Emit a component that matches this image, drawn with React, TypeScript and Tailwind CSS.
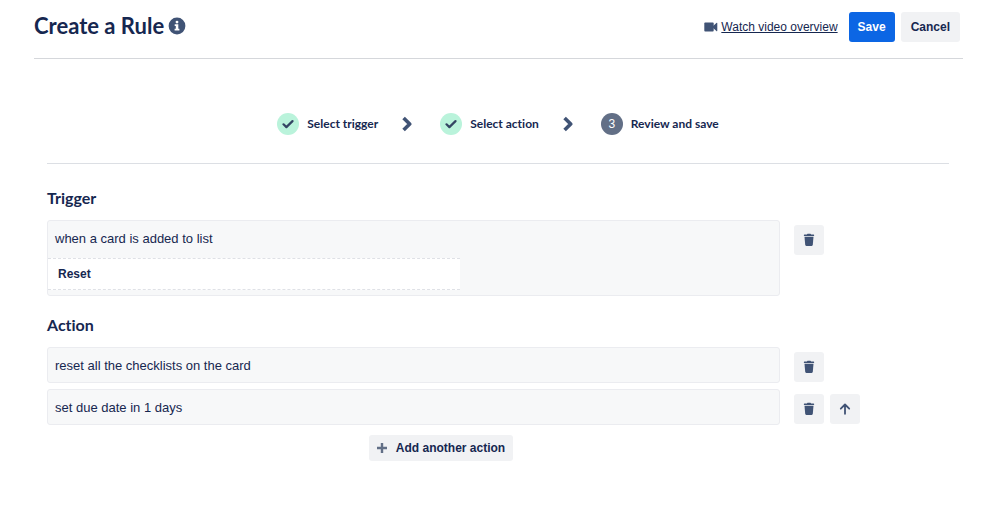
import React from 'react';
import clsx from 'clsx';

const steps = [
  { label: 'Select trigger', done: true },
  { label: 'Select action', done: true },
  { label: 'Review and save', done: false },
];

const actions = ['reset all the checklists on the card', 'set due date in 1 days'];

function InfoIcon() {
  return (
    <svg viewBox="0 0 18 18" className="w-[18px] h-[18px]" aria-hidden="true">
      <circle cx="9" cy="9" r="8.4" fill="#405375" />
      <circle cx="9" cy="5.1" r="1.45" fill="#fff" />
      <path d="M6.7 7.3h3.6v4.5h1.1v1.7H6.6v-1.7h1.2V9H6.7z" fill="#fff" />
    </svg>
  );
}

function VideoIcon() {
  return (
    <svg viewBox="0 0 14 10" className="w-[14px] h-[10px]" fill="#405375" aria-hidden="true">
      <rect x="0.3" y="0.5" width="9.4" height="9" rx="0.9" />
      <path d="M8.8 4.3 12.4 1a.5.5 0 0 1 .9.4v7.2a.5.5 0 0 1-.9.4L8.8 5.7z" />
    </svg>
  );
}

function TrashIcon() {
  return (
    <svg viewBox="0 0 12 14" className="w-3 h-[14px]" fill="#405375" aria-hidden="true">
      <path d="M4 1.5Q4 .8 4.7.8h2.6Q8 .8 8 1.5h2.6q.5 0 .5.5v1.1H.9V2q0-.5.5-.5z" />
      <path d="M1.5 3.8h9l-.7 8q-.1 1.1-1.1 1.1H3.3q-1 0-1.1-1.1z" />
    </svg>
  );
}

function ArrowUpIcon() {
  return (
    <svg viewBox="0 0 12 12" className="w-3 h-3" fill="none" stroke="#405375" strokeWidth="1.8" strokeLinecap="round" strokeLinejoin="round" aria-hidden="true">
      <path d="M6 10.8V1.6M1.8 5.7 6 1.5l4.2 4.2" />
    </svg>
  );
}

function IconButton({ label, children }: { label: string; children: React.ReactNode }) {
  return (
    <button type="button" aria-label={label} className="w-[30px] h-[30px] flex items-center justify-center rounded-[3px] bg-[#f1f2f4]">
      {children}
    </button>
  );
}

interface RuleRowProps {
  text: string;
  movable?: boolean;
  children?: React.ReactNode;
}

function RuleRow({ text, movable, children }: RuleRowProps) {
  return (
    <div className="flex items-start gap-[14px]">
      <div className={clsx('flex-1 rounded-[3px] border border-[#ebecf0] bg-[#f7f8f9]', children && 'pb-[5px]')}>
        <p className="px-[7px] pt-[9px] pb-[7px] text-[13px] leading-[18px]">{text}</p>
        {children}
      </div>
      <div className="w-[155px] flex gap-1.5 pt-[5px]">
        <IconButton label="Delete"><TrashIcon /></IconButton>
        {movable && <IconButton label="Move up"><ArrowUpIcon /></IconButton>}
      </div>
    </div>
  );
}

function Steps() {
  return (
    <ol className="flex items-center justify-center">
      {steps.map((step, i) => (
        <li key={step.label} className="flex items-center">
          {i > 0 && (
            <svg viewBox="0 0 10 16" className="w-[10px] h-4 ml-6 mr-7" fill="none" stroke="#405375" strokeWidth="3.6" strokeLinejoin="round" aria-hidden="true">
              <path d="M1.6 1.9 7.7 8 1.6 14.1" />
            </svg>
          )}
          <span
            className={clsx(
              'w-[22px] h-[22px] mr-2 flex items-center justify-center rounded-full text-xs',
              step.done ? 'bg-[#baf3db]' : 'bg-[#626f86] text-white',
            )}
          >
            {step.done ? (
              <svg viewBox="0 0 12 10" className="w-3 h-[10px]" fill="none" stroke="#344563" strokeWidth="2.2" strokeLinecap="round" strokeLinejoin="round" aria-hidden="true">
                <path d="M1.5 5.3 4.4 8.1 10.5 2.1" />
              </svg>
            ) : (
              i + 1
            )}
          </span>
          <span className="font-[Lato,sans-serif] text-xs font-bold">{step.label}</span>
        </li>
      ))}
    </ol>
  );
}

export default function App() {
  return (
    <div className="bg-white pl-[34px] pr-9 text-[#162750] font-['Liberation_Sans',Arial,sans-serif] [font-variant-ligatures:none]">
      <header className="flex items-start justify-between border-b border-[#d5d7db] pt-3 pb-4 pr-[3px]">
        <div className="flex items-center gap-1">
          <h1 className="font-[Lato,sans-serif] text-[22px] leading-7 font-bold">Create a Rule</h1>
          <button type="button" aria-label="About rules"><InfoIcon /></button>
        </div>
        <div className="flex items-center gap-1.5">
          <a href="#overview" className="flex items-center gap-[3px] mr-[5px] text-xs">
            <VideoIcon />
            <span className="underline">Watch video overview</span>
          </a>
          <button type="button" className="h-[30px] px-[9px] rounded-[3px] bg-[#0c66e4] text-white text-xs font-bold">Save</button>
          <button type="button" className="h-[30px] px-[10px] rounded-[3px] bg-[#f1f2f4] text-xs font-bold">Cancel</button>
        </div>
      </header>

      <main className="pl-[13px] pr-[14px] pt-[54px]">
        <Steps />
        <hr className="mt-7 border-t border-[#dcdfe4]" />

        <section className="mt-[22px]">
          <h2 className="font-[Lato,sans-serif] text-base leading-6 font-bold">Trigger</h2>
          <div className="mt-[10px]">
            <RuleRow text="when a card is added to list">
              <div className="w-[412px] mt-[3px] border-y border-dashed border-[#dfe1e6] bg-white px-[10px] py-[6px] text-xs leading-[18px] font-bold">
                Reset
              </div>
            </RuleRow>
          </div>
        </section>

        <section className="mt-[17px]">
          <h2 className="font-[Lato,sans-serif] text-base leading-6 font-bold">Action</h2>
          <div className="mt-[10px] flex flex-col gap-1.5">
            {actions.map((action, i) => (
              <RuleRow key={action} text={action} movable={i > 0} />
            ))}
          </div>
          <div className="mt-[10px] pr-[114px] flex justify-center">
            <button type="button" className="h-[26px] px-2 flex items-center gap-[9px] rounded-[3px] bg-[#f1f2f4] text-xs font-bold">
              <svg viewBox="0 0 10 10" className="w-[10px] h-[10px]" stroke="#626f86" strokeWidth="2.4" aria-hidden="true">
                <path d="M5 0v10M0 5h10" />
              </svg>
              Add another action
            </button>
          </div>
        </section>
      </main>
    </div>
  );
}
